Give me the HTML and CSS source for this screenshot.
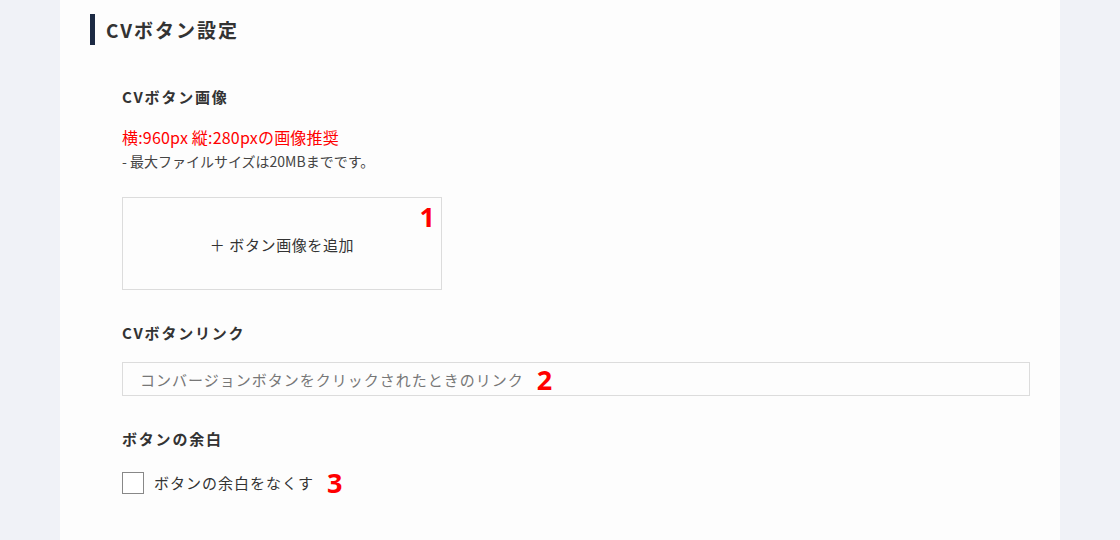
FILE: index.html
```html
<!DOCTYPE html>
<html lang="ja">
<head>
  <meta charset="UTF-8">
  <title>CVボタン設定</title>
  <link rel="stylesheet" href="styles.css">
</head>
<body>
  <div class="panel">
    <h2 class="sec-title">CVボタン設定</h2>
    <div class="fields">
      <div class="field">
        <div class="label">CVボタン画像</div>
        <p class="note-red">横:960px 縦:280pxの画像推奨</p>
        <p class="note">- 最大ファイルサイズは20MBまでです。</p>
        <div class="upload">
          <span>＋ ボタン画像を追加</span>
          <span class="mark mark-corner">1</span>
        </div>
      </div>
      <div class="field">
        <div class="label">CVボタンリンク</div>
        <div class="input">
          <span class="placeholder">コンバージョンボタンをクリックされたときのリンク</span>
          <span class="mark">2</span>
        </div>
      </div>
      <div class="field">
        <div class="label">ボタンの余白</div>
        <label class="check">
          <span class="box"></span>
          <span>ボタンの余白をなくす</span>
          <span class="mark">3</span>
        </label>
      </div>
    </div>
  </div>
</body>
</html>
```

FILE: styles.css
```css
body {
  margin: 0;
  background: #f0f2f7;
  color: #333;
  font-family: "Noto Sans CJK JP", "Noto Sans", sans-serif;
}
.panel {
  width: 1000px;
  height: 540px;
  margin-left: 60px;
  background: #fdfdfd;
  box-sizing: border-box;
  padding: 14px 30px 0 30px;
  overflow: hidden;
}
.sec-title {
  margin: 0;
  border-left: 5px solid #1c2a43;
  padding-left: 11px;
  font-size: 19px;
  line-height: 31px;
  font-weight: bold;
  letter-spacing: 2px;
}
.fields {
  padding: 0 0 0 32px;
  margin-top: 41px;
}
.field { margin-bottom: 32px; }
.label {
  font-size: 15px;
  font-weight: bold;
  line-height: 22px;
  letter-spacing: 1.8px;
}
.note-red {
  margin: 18px 0 0 0;
  color: #f00;
  font-size: 16px;
  line-height: 22px;
  letter-spacing: 0.2px;
}
.note {
  margin: 3px 0 0 0;
  font-size: 14px;
  line-height: 20px;
  color: #444;
}
.upload {
  position: relative;
  margin-top: 26px;
  width: 320px;
  height: 93px;
  box-sizing: border-box;
  border: 1px solid #dcdcdc;
  display: flex;
  align-items: center;
  justify-content: center;
  font-size: 15px;
  letter-spacing: 0.6px;
  padding-top: 2px;
}
.mark {
  color: #f00;
  font-weight: bold;
  font-size: 27px;
  line-height: 27px;
  letter-spacing: 0;
  font-family: "Noto Sans", sans-serif;
}
.mark-corner {
  position: absolute;
  top: 5px;
  right: 6px;
}
.input {
  margin-top: 18px;
  height: 34px;
  box-sizing: border-box;
  border: 1px solid #dcdcdc;
  display: flex;
  align-items: center;
  gap: 13px;
  padding-left: 17px;
  font-size: 15px;
  letter-spacing: 1px;
}
.placeholder { color: #777; }
.check {
  margin-top: 19px;
  display: flex;
  align-items: center;
  font-size: 15px;
  letter-spacing: 1px;
}
.box {
  width: 22px;
  height: 22px;
  box-sizing: border-box;
  border: 1px solid #888;
  background: #fff;
  margin-right: 10px;
}
.check .mark { margin-left: 13px; }
```
